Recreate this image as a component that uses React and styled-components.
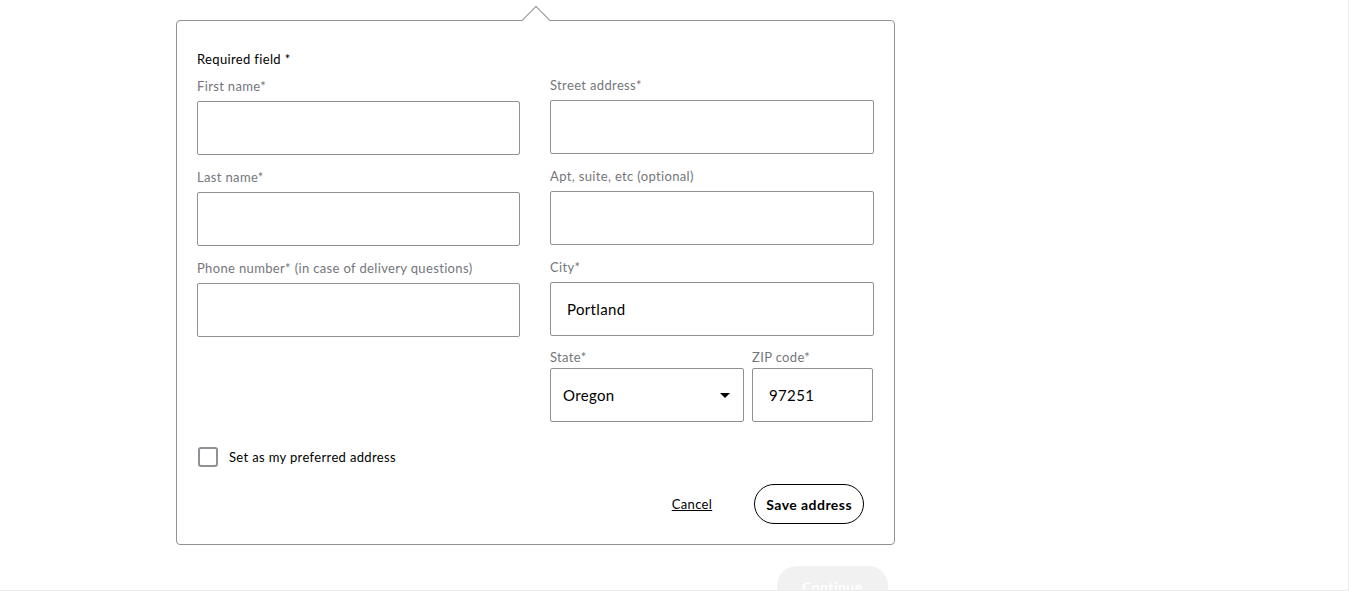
import React from 'react'
import styled, { createGlobalStyle } from 'styled-components'

const GlobalStyle = createGlobalStyle`
  html, body { margin: 0; padding: 0; background: #fff; }
  body {
    font-family: Lato, "Open Sans", Arial, sans-serif;
    color: #2e2f32;
    letter-spacing: 0.35px;
  }
  * { box-sizing: border-box; }
`

const Page = styled.div`
  width: 100vw;
  height: 100vh;
  overflow: hidden;
  padding: 20px 0 0 176px;
  border-right: 1px solid #ececec;
  border-bottom: 1px solid #ececec;
`

const Card = styled.div`
  position: relative;
  width: 719px;
  border: 1px solid #909196;
  border-radius: 4px;
  background: #fff;
  padding: 30px 20px 20px 20px;
`

const Caret = styled.span`
  position: absolute;
  top: -11px;
  left: 349px;
  width: 20px;
  height: 20px;
  background: #fff;
  border-left: 1px solid #909196;
  border-top: 1px solid #909196;
  transform: rotate(45deg);
`

const Required = styled.div`
  font-size: 13px;
  line-height: 16px;
  color: #000;
  margin-bottom: 10px;
`

const Grid = styled.div`
  display: grid;
  grid-template-columns: 323px 324px;
  column-gap: 30px;
`

const Column = styled.div`
  display: flex;
  flex-direction: column;
  gap: 14px;
  padding-top: ${p => p.$offset || 0}px;
`

const Field = styled.label`
  display: flex;
  flex-direction: column;
  gap: ${p => p.$tight ? 3 : 7}px;
  width: ${p => p.$width ? `${p.$width}px` : 'auto'};
`

const Label = styled.span`
  font-size: 13px;
  line-height: 16px;
  color: #74767c;
`

const Input = styled.input`
  height: 54px;
  width: 100%;
  border: 1px solid #909196;
  border-radius: 2px;
  padding: 0 16px;
  font-family: inherit;
  font-size: 15px;
  letter-spacing: 0.35px;
  color: #000;
  background: #fff;
  outline: none;
`

const SelectWrap = styled.div`
  position: relative;
  svg {
    position: absolute;
    right: 14px;
    top: 25px;
    pointer-events: none;
  }
`

const Select = styled.select`
  appearance: none;
  height: 54px;
  width: 100%;
  border: 1px solid #909196;
  border-radius: 2px;
  padding: 0 12px;
  font-family: inherit;
  font-size: 15px;
  letter-spacing: 0.35px;
  color: #000;
  background: #fff;
  outline: none;
`

const SplitRow = styled.div`
  display: flex;
  gap: 8px;
  margin-top: -1px;
`

const CheckRow = styled.label`
  display: flex;
  align-items: center;
  gap: 11px;
  margin: 25px 0 0 1px;
  font-size: 13px;
  color: #000;
`

const Box = styled.span`
  width: 20px;
  height: 20px;
  border: 2px solid #909196;
  border-radius: 3px;
`

const Actions = styled.div`
  display: flex;
  justify-content: flex-end;
  align-items: center;
  gap: 42px;
  margin: 17px 10px 0 0;
`

const LinkButton = styled.button`
  border: none;
  background: none;
  padding: 0;
  font-family: inherit;
  font-size: 13px;
  letter-spacing: 0.35px;
  color: #000;
  text-decoration: underline;
  cursor: pointer;
`

const PillButton = styled.button`
  height: 40px;
  padding: 0 ${p => p.$pad || 11}px;
  border-radius: 20px;
  border: ${p => p.$disabled ? 'none' : '1px solid #000'};
  background: ${p => p.$disabled ? '#f1f1f2' : '#fff'};
  color: ${p => p.$disabled ? '#fff' : '#000'};
  font-family: inherit;
  font-weight: 700;
  font-size: 14px;
  letter-spacing: 0.45px;
  cursor: pointer;
`

const Footer = styled.div`
  margin: 21px 0 0 601px;
`

const Arrow = () => (
  <svg width="10" height="5" viewBox="0 0 10 5">
    <path d="M0 0 L10 0 L5 5 Z" fill="#000" />
  </svg>
)

const App = () => {
  return (
    <Page>
      <GlobalStyle />
      <Card>
        <Caret />
        <Required>Required field *</Required>
        <Grid>
          <Column $offset={1}>
            <Field>
              <Label>First name*</Label>
              <Input type="text" />
            </Field>
            <Field>
              <Label>Last name*</Label>
              <Input type="text" />
            </Field>
            <Field>
              <Label>Phone number* (in case of delivery questions)</Label>
              <Input type="tel" />
            </Field>
          </Column>
          <Column>
            <Field>
              <Label>Street address*</Label>
              <Input type="text" />
            </Field>
            <Field>
              <Label>Apt, suite, etc (optional)</Label>
              <Input type="text" />
            </Field>
            <Field>
              <Label>City*</Label>
              <Input type="text" defaultValue="Portland" />
            </Field>
            <SplitRow>
              <Field $tight $width={194}>
                <Label>State*</Label>
                <SelectWrap>
                  <Select defaultValue="OR">
                    <option value="OR">Oregon</option>
                  </Select>
                  <Arrow />
                </SelectWrap>
              </Field>
              <Field $tight $width={121}>
                <Label>ZIP code*</Label>
                <Input type="text" defaultValue="97251" />
              </Field>
            </SplitRow>
          </Column>
        </Grid>
        <CheckRow>
          <Box />
          Set as my preferred address
        </CheckRow>
        <Actions>
          <LinkButton>Cancel</LinkButton>
          <PillButton>Save address</PillButton>
        </Actions>
      </Card>
      <Footer>
        <PillButton $disabled $pad={25}>Continue</PillButton>
      </Footer>
    </Page>
  )
}

export default App
